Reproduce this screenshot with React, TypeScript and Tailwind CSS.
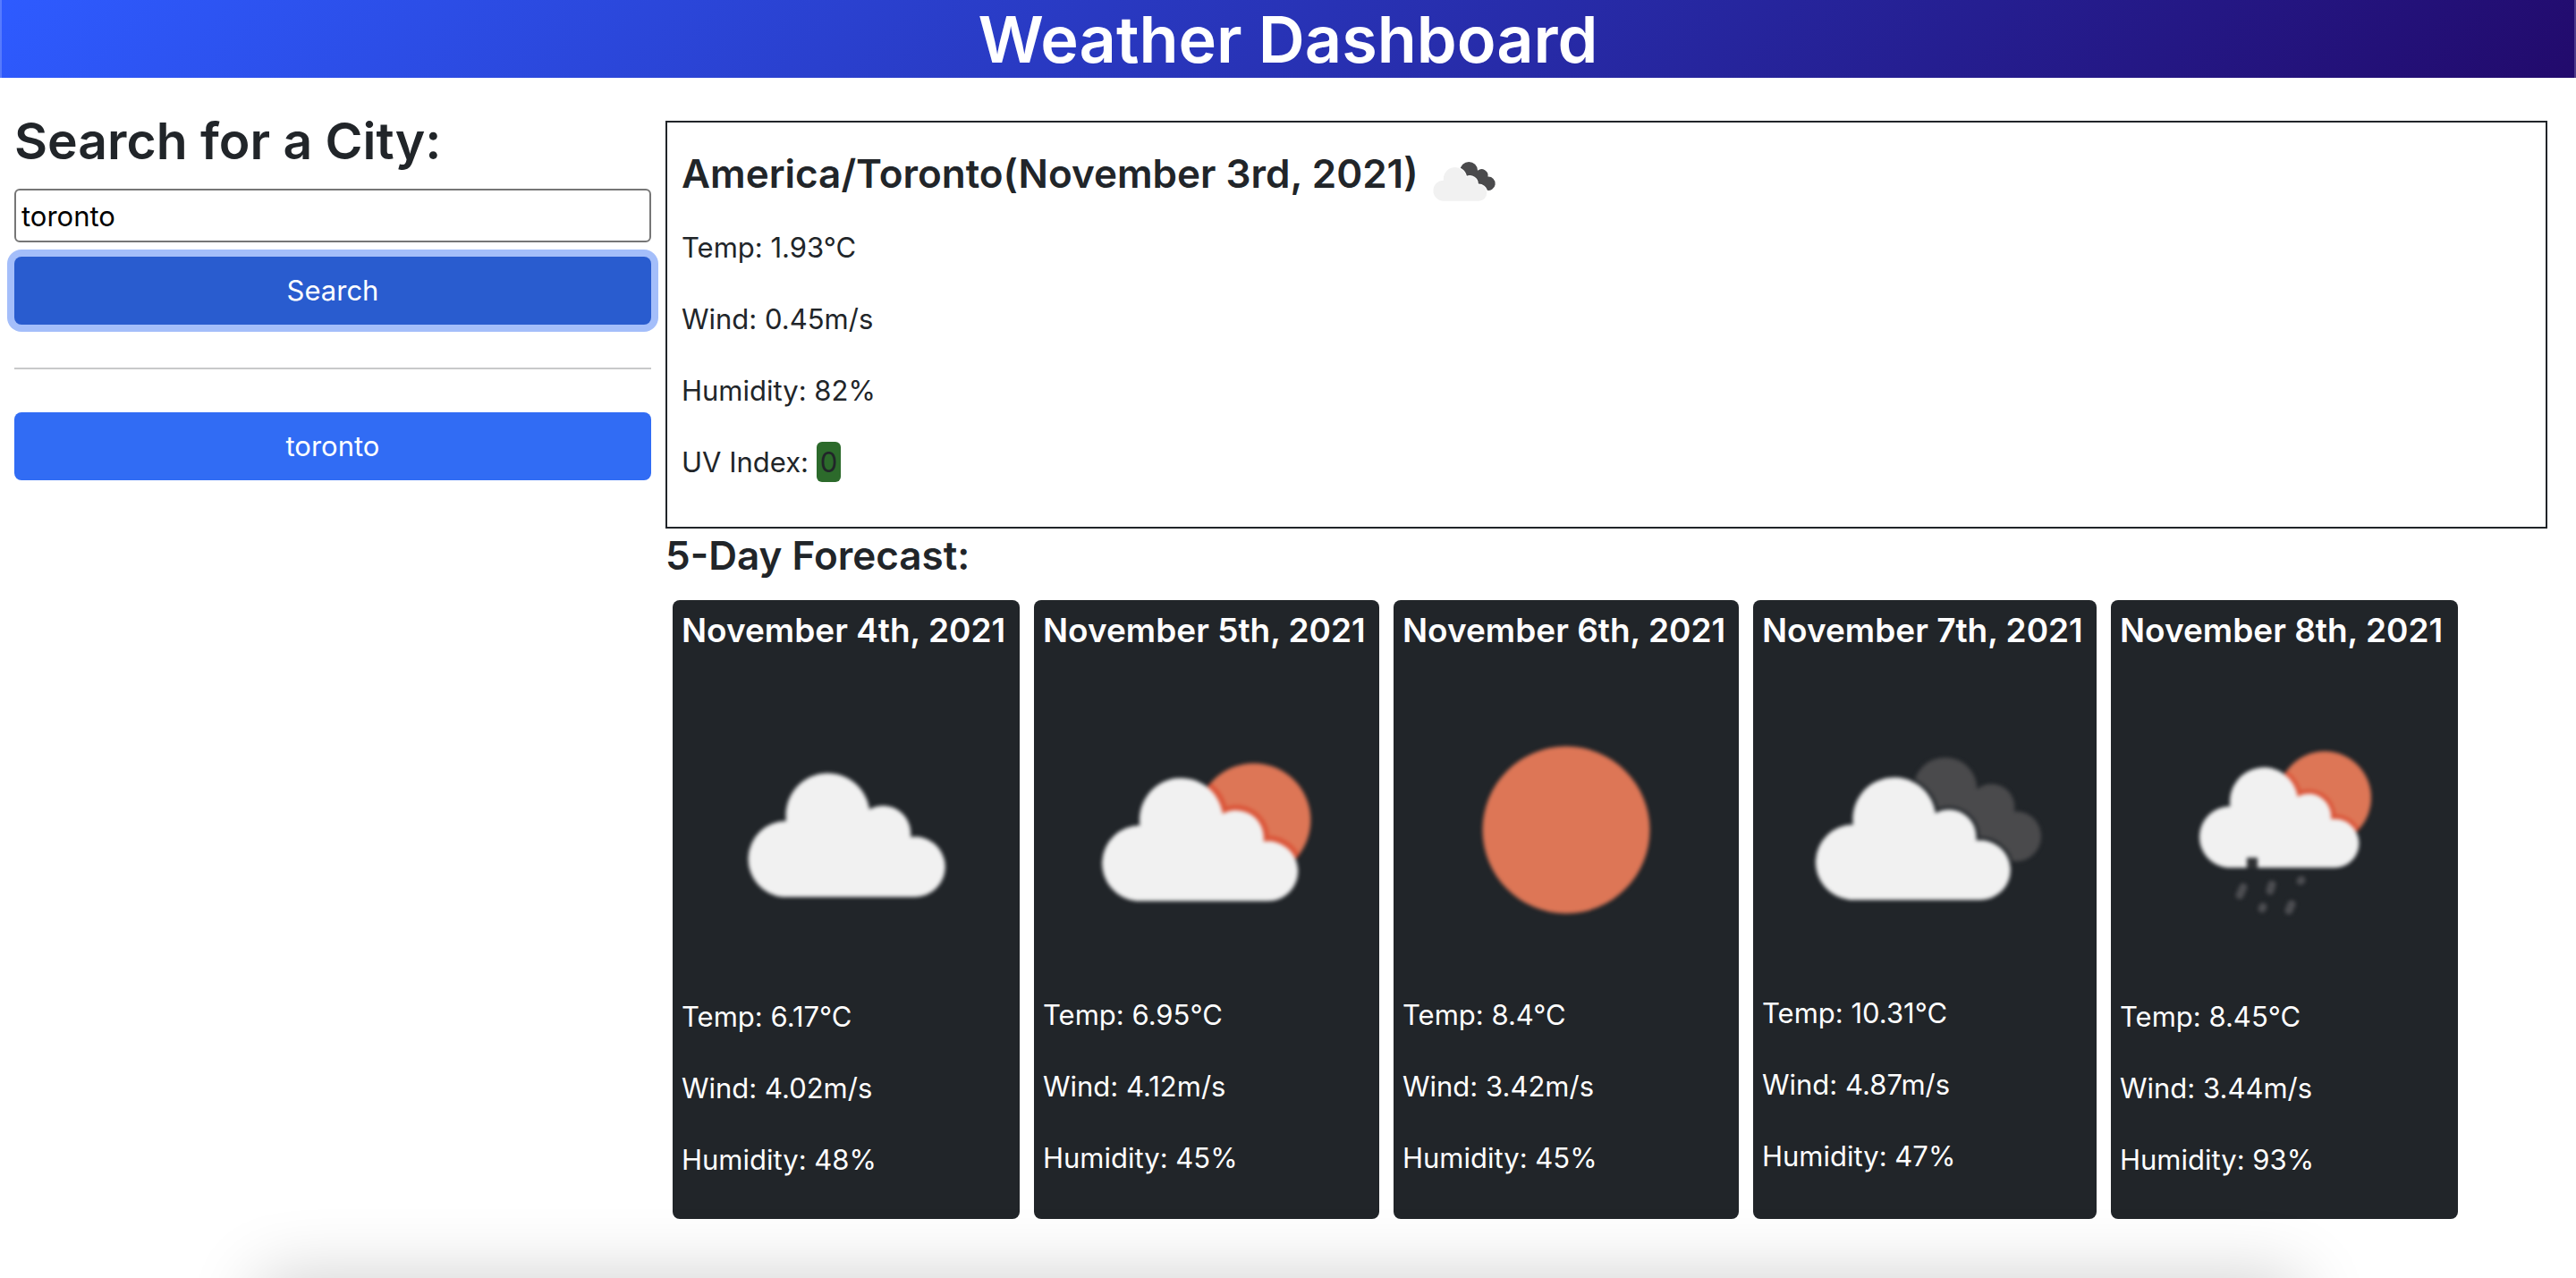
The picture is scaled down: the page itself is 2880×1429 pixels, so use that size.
import React, { useState } from "react";

type IconKind = "cloud" | "partly" | "clear" | "broken" | "rain";

const CLOUD =
  "M57 183A42.6 42.6 0 0 1 61 98A46.8 46.8 0 0 1 154 85A31 31 0 0 1 200 116A33.7 33.7 0 1 1 204 183Z";

/* Orange disc with a darker rim where the cloud overlaps it. */
function SunBehindCloud({ id, cx, cy, r, cloud }: { id: string; cx: number; cy: number; r: number; cloud: string }) {
  return (
    <>
      <clipPath id={id}>
        <circle cx={cx} cy={cy} r={r} />
      </clipPath>
      <circle cx={cx} cy={cy} r={r} fill="#dd7656" />
      <g clipPath={`url(#${id})`}>
        <path d={CLOUD} transform={cloud} fill="none" stroke="#db5438" strokeWidth="12" />
      </g>
      <path d={CLOUD} transform={cloud} fill="#f1f1f1" />
    </>
  );
}

function WeatherIcon({ kind, label, className }: { kind: IconKind; label: string; className: string }) {
  return (
    <svg viewBox="0 0 368 368" role="img" aria-label={label} className={className}>
      {kind === "cloud" && <path d={CLOUD} transform="translate(56 75)" fill="#f1f1f1" />}
      {kind === "partly" && (
        <SunBehindCloud id="sun-partly" cx={237} cy={173} r={64} cloud="translate(48 81)" />
      )}
      {kind === "clear" && <circle cx="184" cy="184" r="94" fill="#dd7656" />}
      {kind === "broken" && (
        <>
          <mask id="cloud-gap">
            <rect width="368" height="368" fill="#fff" />
            <path d={CLOUD} transform="translate(42 81)" fill="#000" stroke="#000" strokeWidth="7" />
          </mask>
          <path
            d="M171 139A36 36 0 0 1 243 139A26 26 0 0 1 285 164A28.3 28.3 0 1 1 278 219L200 212Z"
            fill="#4a4a4c"
            mask="url(#cloud-gap)"
          />
          <path d={CLOUD} transform="translate(42 81)" fill="#f1f1f1" />
        </>
      )}
      {kind === "rain" && (
        <>
          <SunBehindCloud id="sun-rain" cx={229} cy={147} r={52} cloud="translate(74 77) scale(.81)" />
          <path d="M142 214h12v12h-12z" fill="#2f3134" />
          <g fill="none" stroke="#4c4d51" strokeWidth="9" strokeLinecap="round">
            <path d="M138 247l-4 9" />
            <path d="M170 244l-2 7" />
            <path d="M203 239l-1 1" />
            <path d="M160 269l-1 2" />
            <path d="M192 266l-3 7" />
          </g>
        </>
      )}
    </svg>
  );
}

const DAYS: { date: string; icon: IconKind; label: string; temp: string; wind: string; humidity: string }[] = [
  { date: "November 4th, 2021", icon: "cloud", label: "Scattered clouds", temp: "6.17", wind: "4.02", humidity: "48" },
  { date: "November 5th, 2021", icon: "partly", label: "Few clouds", temp: "6.95", wind: "4.12", humidity: "45" },
  { date: "November 6th, 2021", icon: "clear", label: "Clear sky", temp: "8.4", wind: "3.42", humidity: "45" },
  { date: "November 7th, 2021", icon: "broken", label: "Broken clouds", temp: "10.31", wind: "4.87", humidity: "47" },
  { date: "November 8th, 2021", icon: "rain", label: "Rain", temp: "8.45", wind: "3.44", humidity: "93" },
];

export default function App() {
  const [city, setCity] = useState("toronto");
  return (
    <div className="relative min-h-screen overflow-hidden bg-white font-['Inter',sans-serif] text-[31px] leading-[48px] text-[#212529]">
      <header className="border-x-2 border-white/20 bg-linear-[135deg,#2e5bff,#220a6c] bg-origin-border">
        <h1 className="text-center text-[72px] leading-[87px] font-semibold text-white">Weather Dashboard</h1>
      </header>

      <div className="flex items-start pt-8 pr-4 pl-4">
        <aside className="mr-4 w-1/4 shrink-0">
          <h2 className="text-[57px] leading-[78px] font-semibold">
            <label htmlFor="city">Search for a City:</label>
          </h2>
          <input
            id="city"
            value={city}
            onChange={(e) => setCity(e.target.value)}
            className="mt-3.5 block h-[60px] w-full rounded-md border-2 border-[#767676] bg-white px-1.5 text-black outline-none"
          />
          <button className="mt-4 block w-full rounded-lg bg-[#295ccf] py-3.5 text-white ring-8 ring-[#a4befa]">
            Search
          </button>
          <hr className="my-12 border-t-2 border-[#c8c9ca]" />
          <button className="block w-full rounded-lg bg-[#316cf4] py-3.5 text-white">toronto</button>
        </aside>

        <main className="min-w-0 flex-1">
          <section className="mt-4 mr-4 border-2 border-[#212529] p-4">
            <div className="flex items-start">
              <h3 className="text-[44px] leading-[82px] font-semibold">America/Toronto(November 3rd, 2021)</h3>
              <WeatherIcon kind="broken" label="Broken clouds" className="size-[100px]" />
            </div>
            <p className="mb-8">Temp: 1.93°C</p>
            <p className="mb-8">Wind: 0.45m/s</p>
            <p className="mb-8">Humidity: 82%</p>
            <p className="mb-8">
              UV Index: <span className="rounded-md bg-[#2c6a2b] px-1 py-1">0</span>
            </p>
          </section>

          <h3 className="mb-5 text-[44px] leading-[60px] font-semibold">5-Day Forecast:</h3>
          <div className="mr-[116px] ml-2 grid grid-cols-[388fr_386fr_386fr_384fr_388fr] gap-4">
            {DAYS.map((d) => (
              <article key={d.date} className="rounded-lg bg-[#212529] p-2.5 text-white">
                <h4 className="mb-4 text-[37px] leading-[48px] font-semibold whitespace-nowrap">{d.date}</h4>
                <WeatherIcon kind={d.icon} label={d.label} className="aspect-square w-full blur-[2px]" />
                <p className="mb-8">Temp: {d.temp}°C</p>
                <p className="mb-8">Wind: {d.wind}m/s</p>
                <p className="mb-8">Humidity: {d.humidity}%</p>
              </article>
            ))}
          </div>
        </main>
      </div>

      <div className="absolute top-full right-[310px] left-[290px] h-20 shadow-[0_0_80px_rgba(0,0,0,0.2)]" />
    </div>
  );
}
